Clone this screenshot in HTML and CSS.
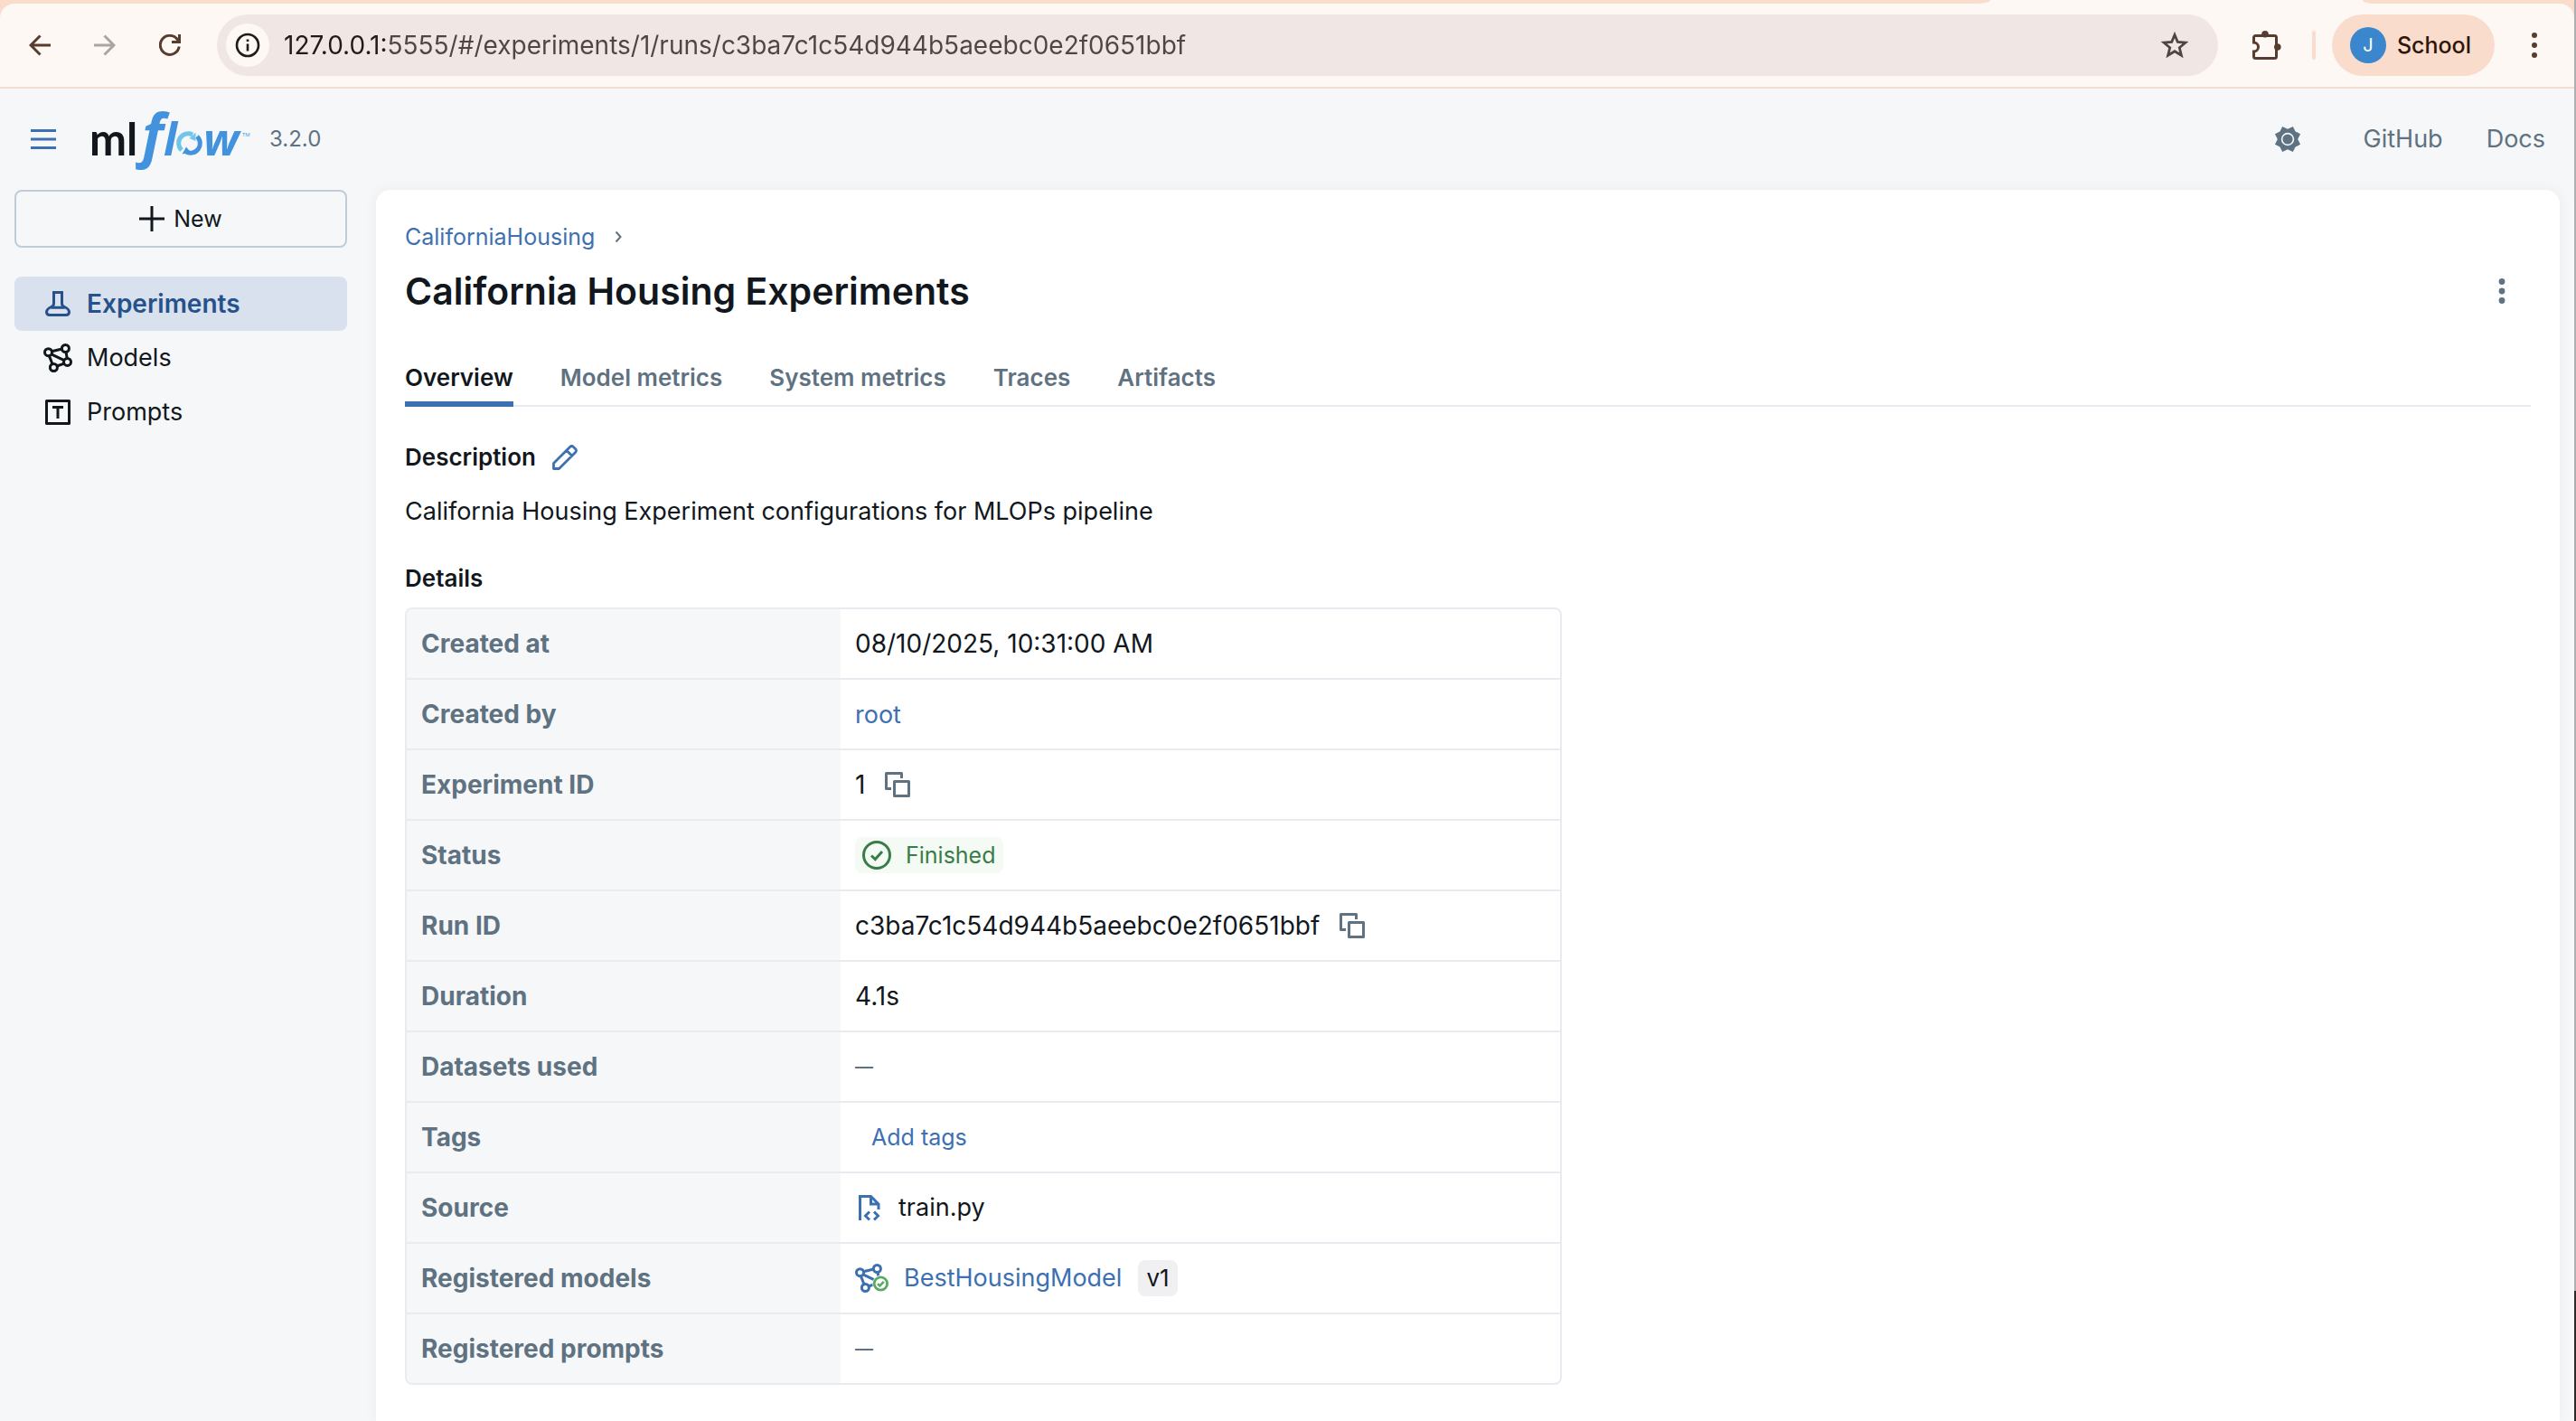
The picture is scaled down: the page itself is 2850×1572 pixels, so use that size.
FILE: index.html
```html
<!DOCTYPE html>
<html lang="en">
<head>
<meta charset="utf-8">
<title>California Housing Experiments - MLflow</title>
<link rel="stylesheet" href="styles.css">
</head>
<body>
<svg class="sprite" aria-hidden="true">
  <symbol id="i-models" viewBox="0 0 16 16">
    <g fill="none" stroke="currentColor" stroke-width="1.5">
      <path d="M4.6 4.4l5.7-1.4M4.4 5.9l7.1 3.4M3.2 6.8l1.8 4.6M12.5 4.5l.6 3.7M7.5 12.5l4-1.4"/>
      <circle cx="2.75" cy="4.85" r="2"/><circle cx="12.2" cy="2.75" r="2"/><circle cx="13.25" cy="10.2" r="2"/><circle cx="5.7" cy="13.25" r="2"/>
    </g>
  </symbol>
  <symbol id="i-copy" viewBox="0 0 16 16">
    <path d="M4.5 10.25H1.75v-8.5h8.5V4.5M6.25 6.25h8v8h-8z" fill="none" stroke="currentColor" stroke-width="1.5" stroke-linejoin="round"/>
  </symbol>
</svg>

<div class="window">
  <header class="browser">
    <div class="strip"><span class="strip-left"></span><span class="strip-right"></span></div>
    <div class="toolbar">
      <div class="nav-buttons">
        <button class="icon-btn" aria-label="Back"><svg width="24" height="24" viewBox="0 0 24 24"><path d="M24 12H2M12.5 1.5L2 12l10.5 10.5" fill="none" stroke="currentColor" stroke-width="3"/></svg></button>
        <button class="icon-btn disabled" aria-label="Forward"><svg width="24" height="24" viewBox="0 0 24 24"><path d="M0 12h22M11.5 1.5L22 12 11.5 22.5" fill="none" stroke="currentColor" stroke-width="3"/></svg></button>
        <button class="icon-btn" aria-label="Reload"><svg width="24" height="24" viewBox="0 0 24 24"><path d="M22.2 13.5A10.500 10.500 0 1 1 19.8 5L22 8" fill="none" stroke="currentColor" stroke-width="3"/><path d="M21 0h3v10H14V7h7z" fill="currentColor"/></svg></button>
      </div>
      <div class="omnibox">
        <button class="site-info" aria-label="Site information"><svg width="28" height="28" viewBox="0 0 28 28"><circle cx="14" cy="14" r="12" fill="none" stroke="currentColor" stroke-width="2.6"/><path d="M14 12.5v8M14 7.5v2.5" stroke="currentColor" stroke-width="2.6"/></svg></button>
        <input class="url" type="text" aria-label="Address" value="127.0.0.1:5555/#/experiments/1/runs/c3ba7c1c54d944b5aeebc0e2f0651bbf">
        <button class="icon-btn star" aria-label="Bookmark"><svg width="32" height="32" viewBox="0 0 32 32"><path d="M16 4.500l3.300 8 8.600.7-6.600 5.600 2.100 8.400L16 22.700l-7.400 4.500 2.100-8.400-6.600-5.600 8.600-.7z" fill="none" stroke="currentColor" stroke-width="2.8"/></svg></button>
      </div>
      <button class="icon-btn extensions" aria-label="Extensions"><svg width="34" height="34" viewBox="0 0 34 34"><path d="M4.500 6.500h21a2 2 0 0 1 2 2v21a2 2 0 0 1-2 2h-21a2 2 0 0 1-2-2V24a5 5 0 0 0 0-10V8.500a2 2 0 0 1 2-2z" fill="none" stroke="currentColor" stroke-width="3"/><circle cx="15" cy="4.8" r="3.8" fill="currentColor"/><circle cx="28.8" cy="19" r="3.8" fill="currentColor"/></svg></button>
      <span class="divider"></span>
      <button class="profile"><span class="avatar">J</span>School</button>
      <button class="icon-btn" aria-label="Browser menu"><svg width="8" height="28" viewBox="0 0 8 28" fill="currentColor"><circle cx="4" cy="3" r="3"/><circle cx="4" cy="14" r="3"/><circle cx="4" cy="25" r="3"/></svg></button>
    </div>
  </header>

  <header class="app-header">
    <button class="icon-btn menu" aria-label="Toggle sidebar"><svg width="28" height="22" viewBox="0 0 28 22"><path d="M0 1.500h28M0 11h28M0 20.500h28" stroke="currentColor" stroke-width="3"/></svg></button>
    <a class="logo" href="#" aria-label="MLflow home">
      <svg width="180" height="104" viewBox="0 -16 180 104">
        <text class="logo-ml" x="-1" y="54">ml</text>
        <text class="logo-f" x="57" y="54">f</text>
        <text class="logo-lw" x="81" y="54">l</text>
        <text class="logo-lw" x="125" y="54">w</text>
        <g fill="none" stroke-width="5">
          <path d="M101 48a10.500 10.500 0 0 1 12-17" stroke="#6fc6ea"/>
          <path d="M118 33a10.500 10.500 0 0 1-12 17" stroke="#4392dd"/>
        </g>
        <path d="M116.500 28.500v9.500l-7-3z" fill="#6fc6ea"/>
        <path d="M101.500 52.500l4.500-8 5 6z" fill="#4392dd"/>
        <text class="logo-tm" x="168" y="33">TM</text>
      </svg>
    </a>
    <span class="version">3.2.0</span>
    <nav class="header-links">
      <button class="icon-btn" aria-label="Toggle theme"><svg width="32" height="32" viewBox="-8 -8 16 16"><path d="M7.020 2.910L4.300 4.300 2.910 7.020 0 5.600-2.910 7.020-4.300 4.300-7.020 2.910-5.600 0-7.020-2.910-4.300-4.300-2.910-7.020 0-5.600 2.910-7.020 4.300-4.300 7.020-2.910 5.600 0z" fill="currentColor"/><circle r="3.2" fill="currentColor" stroke="#f6f7f9" stroke-width=".8"/></svg></button>
      <a href="#">GitHub</a>
      <a href="#">Docs</a>
    </nav>
  </header>

  <div class="body">
    <aside class="sidebar">
      <button class="new-btn"><svg width="28" height="28" viewBox="0 0 28 28"><path d="M14 0v28M0 14h28" stroke="currentColor" stroke-width="3"/></svg>New</button>
      <nav class="side-nav">
        <a class="side-item active" href="#"><svg width="32" height="32" viewBox="0 0 16 16"><path d="M5.750 1.750h4.500v6.100c0 .9.5 1.500 1.400 1.900 1.500.7 2.600 1.500 2.600 2.900 0 1-.8 1.600-1.800 1.600H3.550c-1 0-1.800-.6-1.800-1.600 0-1.400 1.100-2.200 2.600-2.900.9-.4 1.400-1 1.400-1.900zM4.200 10.100h7.600" fill="none" stroke="currentColor" stroke-width="1.5"/></svg>Experiments</a>
        <a class="side-item" href="#"><svg width="32" height="32"><use href="#i-models"/></svg>Models</a>
        <a class="side-item" href="#"><svg width="32" height="32" viewBox="0 0 16 16"><path d="M1.750 1.750h12.500v12.500H1.750zM5 5.250h6M8 5.250v6.250" fill="none" stroke="currentColor" stroke-width="1.5" stroke-linejoin="round"/></svg>Prompts</a>
      </nav>
    </aside>

    <main class="card">
      <nav class="breadcrumb">
        <a href="#">CaliforniaHousing</a>
        <svg width="8" height="14" viewBox="0 0 8 14"><path d="M1.500 1.500L6.500 7l-5 5.500" fill="none" stroke="currentColor" stroke-width="2"/></svg>
      </nav>
      <div class="title-row">
        <h1>California Housing Experiments</h1>
        <button class="icon-btn" aria-label="More actions"><svg width="8" height="28" viewBox="0 0 8 28" fill="currentColor"><circle cx="4" cy="3.5" r="3.4"/><circle cx="4" cy="14" r="3.4"/><circle cx="4" cy="24.5" r="3.4"/></svg></button>
      </div>
      <div class="tabs" role="tablist">
        <button class="tab active" role="tab" aria-selected="true">Overview</button>
        <button class="tab" role="tab">Model metrics</button>
        <button class="tab" role="tab">System metrics</button>
        <button class="tab" role="tab">Traces</button>
        <button class="tab" role="tab">Artifacts</button>
      </div>

      <section class="description">
        <div class="heading-row">
          <h2>Description</h2>
          <button class="edit" aria-label="Edit description"><svg width="32" height="32" viewBox="0 0 16 16"><path d="M1.750 14.250v-3L10.900 2.100a1.200 1.200 0 0 1 1.700 0l1.300 1.300a1.200 1.200 0 0 1 0 1.700l-9.150 9.150zM8.900 4.100l3 3" fill="none" stroke="currentColor" stroke-width="1.4" stroke-linejoin="round"/></svg></button>
        </div>
        <p>California Housing Experiment configurations for MLOPs pipeline</p>
      </section>

      <section class="details">
        <h2>Details</h2>
        <table>
          <tbody>
            <tr><th scope="row">Created at</th><td>08/10/2025, 10:31:00 AM</td></tr>
            <tr><th scope="row">Created by</th><td><a href="#">root</a></td></tr>
            <tr><th scope="row">Experiment ID</th><td><div class="cell">1<button class="copy" aria-label="Copy experiment ID"><svg width="32" height="32"><use href="#i-copy"/></svg></button></div></td></tr>
            <tr><th scope="row">Status</th><td><div class="cell"><span class="tag finished"><svg width="32" height="32" viewBox="0 0 32 32"><circle cx="16" cy="16" r="14.5" fill="none" stroke="currentColor" stroke-width="3"/><path d="M10 16.500l4.300 4L22 12" fill="none" stroke="currentColor" stroke-width="3"/></svg>Finished</span></div></td></tr>
            <tr><th scope="row">Run ID</th><td><div class="cell">c3ba7c1c54d944b5aeebc0e2f0651bbf<button class="copy" aria-label="Copy run ID"><svg width="32" height="32"><use href="#i-copy"/></svg></button></div></td></tr>
            <tr><th scope="row">Duration</th><td>4.1s</td></tr>
            <tr><th scope="row">Datasets used</th><td class="empty">—</td></tr>
            <tr><th scope="row">Tags</th><td><button class="add-tags">Add tags</button></td></tr>
            <tr><th scope="row">Source</th><td><div class="cell source"><svg width="32" height="32" viewBox="0 0 32 32"><path d="M5.500 30V3.500h12L26 12v6M17.500 3.500V12H26" fill="none" stroke="#3d70b2" stroke-width="3"/><path d="M16 20.500L11.500 25l4.500 4.500M21 20.500l4.500 4.500-4.500 4.500" fill="none" stroke="#3d70b2" stroke-width="3"/></svg>train.py</div></td></tr>
            <tr><th scope="row">Registered models</th><td><div class="cell model"><svg width="38" height="32" viewBox="0 0 19 16"><g color="#3d70b2"><use href="#i-models" width="16" height="16"/></g><circle cx="14.2" cy="11" r="4.6" fill="#fff"/><circle cx="14.2" cy="11" r="3.6" fill="#fff" stroke="#5da865" stroke-width="1.4"/><path d="M12.500 11.100l1.200 1.100 2.200-2.300" fill="none" stroke="#5da865" stroke-width="1.3"/></svg><a href="#">BestHousingModel</a><span class="tag ver">v1</span></div></td></tr>
            <tr><th scope="row">Registered prompts</th><td class="empty">—</td></tr>
          </tbody>
        </table>
      </section>
    </main>
  </div>
</div>
</body>
</html>
```
FILE: styles.css
```css
* { box-sizing: border-box; }

body {
  margin: 0;
  font-family: Inter, "Liberation Sans", sans-serif;
  font-size: 28px;
  line-height: 40px;
  color: #11171c;
  background: linear-gradient(#adafb1, #adafb1) 0 0 / 100% calc(100% - 144px) no-repeat #2b2a29;
}

a { color: #3d70b2; text-decoration: none; font-size: 27px; }
h1, h2, p { margin: 0; }
svg { display: block; flex: none; }
button { margin: 0; padding: 0; border: 0; background: none; color: inherit; font: inherit; cursor: pointer; }
.sprite { position: absolute; width: 0; height: 0; }

.window {
  display: flex;
  flex-direction: column;
  min-height: 100vh;
  margin-right: 2px;
  background: #f6f7f9;
}

.icon-btn { display: flex; align-items: center; justify-content: center; flex: none; width: 40px; height: 40px; }

/* Browser chrome */
.browser { background: #fadccd; border-bottom: 2px solid #f1ddd2; color: #563d30; }
.strip { display: flex; justify-content: space-between; height: 4px; background: #fef8f4; }
.strip-left { width: calc(100% - 646px); background: #fadccd; border-bottom-right-radius: 16px 4px; }
.strip-right { width: 234px; background: #fadccd; border-bottom-left-radius: 12px 4px; }
.toolbar { display: flex; align-items: center; padding: 12px 24px; background: #fef8f4; border-radius: 16px 16px 0 0; }
.nav-buttons { display: flex; gap: 32px; }
.disabled { color: #aba5a2; }
.omnibox { display: flex; align-items: center; flex: 1; min-width: 0; height: 68px; margin-left: 32px; padding: 0 28px 0 10px; border-radius: 34px; background: #f0e6e4; }
.site-info { display: flex; align-items: center; justify-content: center; width: 48px; height: 48px; border-radius: 50%; background: #fef8f4; color: #221a17; }
.url {
  flex: 1;
  min-width: 0;
  height: 40px;
  margin-left: 16px;
  padding: 0;
  border: 0;
  outline: 0;
  font: inherit;
  color: transparent;
  background: linear-gradient(90deg, #221a17 116px, #4f4543 116px);
  background-clip: text;
}
.star { color: #4f4543; }
.extensions { margin-left: 34px; }
.divider { width: 4px; height: 32px; margin: 0 18px 0 30px; border-radius: 2px; background: #fadccd; }
.profile { display: flex; align-items: center; gap: 12px; height: 68px; margin-right: 24px; padding: 0 26px 0 20px; border-radius: 34px; background: #fadccd; color: #2e1509; font-size: 25px; font-weight: 500; }
.avatar { width: 40px; height: 40px; border-radius: 50%; background: #3b87cd; color: #fff; font-size: 20px; font-weight: 400; text-align: center; }

/* App header */
.app-header { display: flex; align-items: center; height: 112px; padding: 0 32px 0 28px; color: #5f7281; }
.menu { color: #3d70b2; }
.logo { margin-left: 32px; }
.logo-ml { font: 700 49px Lato, sans-serif; fill: #11171c; }
.logo-f { font: italic 700 64px "Open Sans", sans-serif; fill: #4392dd; }
.logo-lw { font: italic 700 50px "Open Sans", sans-serif; fill: #4392dd; }
.logo-tm { font: 400 6px "Open Sans", sans-serif; fill: #4392dd; }
.version { margin-left: 18px; font-size: 24px; }
.header-links { display: flex; align-items: center; gap: 48px; margin-left: auto; }
.header-links .icon-btn { margin-right: 16px; }
.header-links a { color: #5f7281; }

/* Sidebar */
.body { display: flex; flex: 1; padding-right: 16px; }
.sidebar { flex: none; width: 416px; padding: 0 32px 0 16px; }
.new-btn { display: flex; align-items: center; justify-content: center; gap: 10px; width: 100%; height: 64px; border: 2px solid #c0cdd8; border-radius: 8px; font-size: 25px; }
.side-nav { margin-top: 32px; }
.side-item { display: flex; align-items: center; gap: 16px; height: 60px; padding-left: 32px; border-radius: 8px; color: #11171c; font-size: 27px; }
.side-item.active { background: #d9e0ee; color: #25528a; font-size: 28px; font-weight: 600; }

/* Run page */
.card { flex: 1; min-width: 0; padding: 32px 32px 40px; border-radius: 16px 16px 0 0; background: #fff; box-shadow: 0 0 16px rgba(17, 23, 28, .05); }
.breadcrumb { display: flex; align-items: center; gap: 22px; color: #5f7281; }
.breadcrumb a { font-size: 25px; }
.title-row { display: flex; align-items: center; justify-content: space-between; height: 56px; margin-top: 12px; padding-right: 12px; color: #5f7281; }
h1 { font-size: 41px; font-weight: 600; line-height: 56px; color: #11171c; }
.tabs { display: flex; gap: 52px; margin-top: 48px; box-shadow: inset 0 -2px #e8ecf1; }
.tab { padding-bottom: 6px; border-bottom: 6px solid transparent; color: #5f7281; font-size: 26px; font-weight: 600; }
.tab.active { border-color: #3d70b2; color: #11171c; }
h2 { font-size: 26px; font-weight: 600; line-height: 40px; }
.description { margin-top: 36px; }
.heading-row { display: flex; align-items: center; gap: 16px; }
.edit { color: #3d70b2; }
.description p { margin-top: 20px; font-size: 27px; }
.details { margin-top: 34px; }

table { width: 100%; max-width: 1280px; margin-top: 12px; border: 2px solid #e8ecf1; border-radius: 8px; border-spacing: 0; overflow: hidden; }
th, td { height: 78px; padding: 0 16px; border-bottom: 2px solid #e8ecf1; text-align: left; vertical-align: middle; }
th { width: 480px; background: #f6f7f9; color: #5f7281; font-weight: 700; }
tr:last-child th, tr:last-child td { height: 76px; border-bottom: 0; }
.cell { display: flex; align-items: center; }
.copy { margin-left: 20px; color: #5f7281; }
.tag { display: flex; align-items: center; height: 40px; padding: 0 8px; border-radius: 8px; font-size: 25px; }
.finished { gap: 16px; background: #f4fbf5; color: #3a7c48; }
.ver { margin-left: 18px; padding: 0 9px; background: #f0f0f3; font-size: 26px; }
.source { gap: 16px; font-size: 27px; }
.model svg { margin-right: 16px; }
.add-tags { display: block; padding: 0 18px; color: #3d70b2; font-size: 25px; }
.empty { color: #5f7281; font-size: 20px; font-weight: 600; }
```
